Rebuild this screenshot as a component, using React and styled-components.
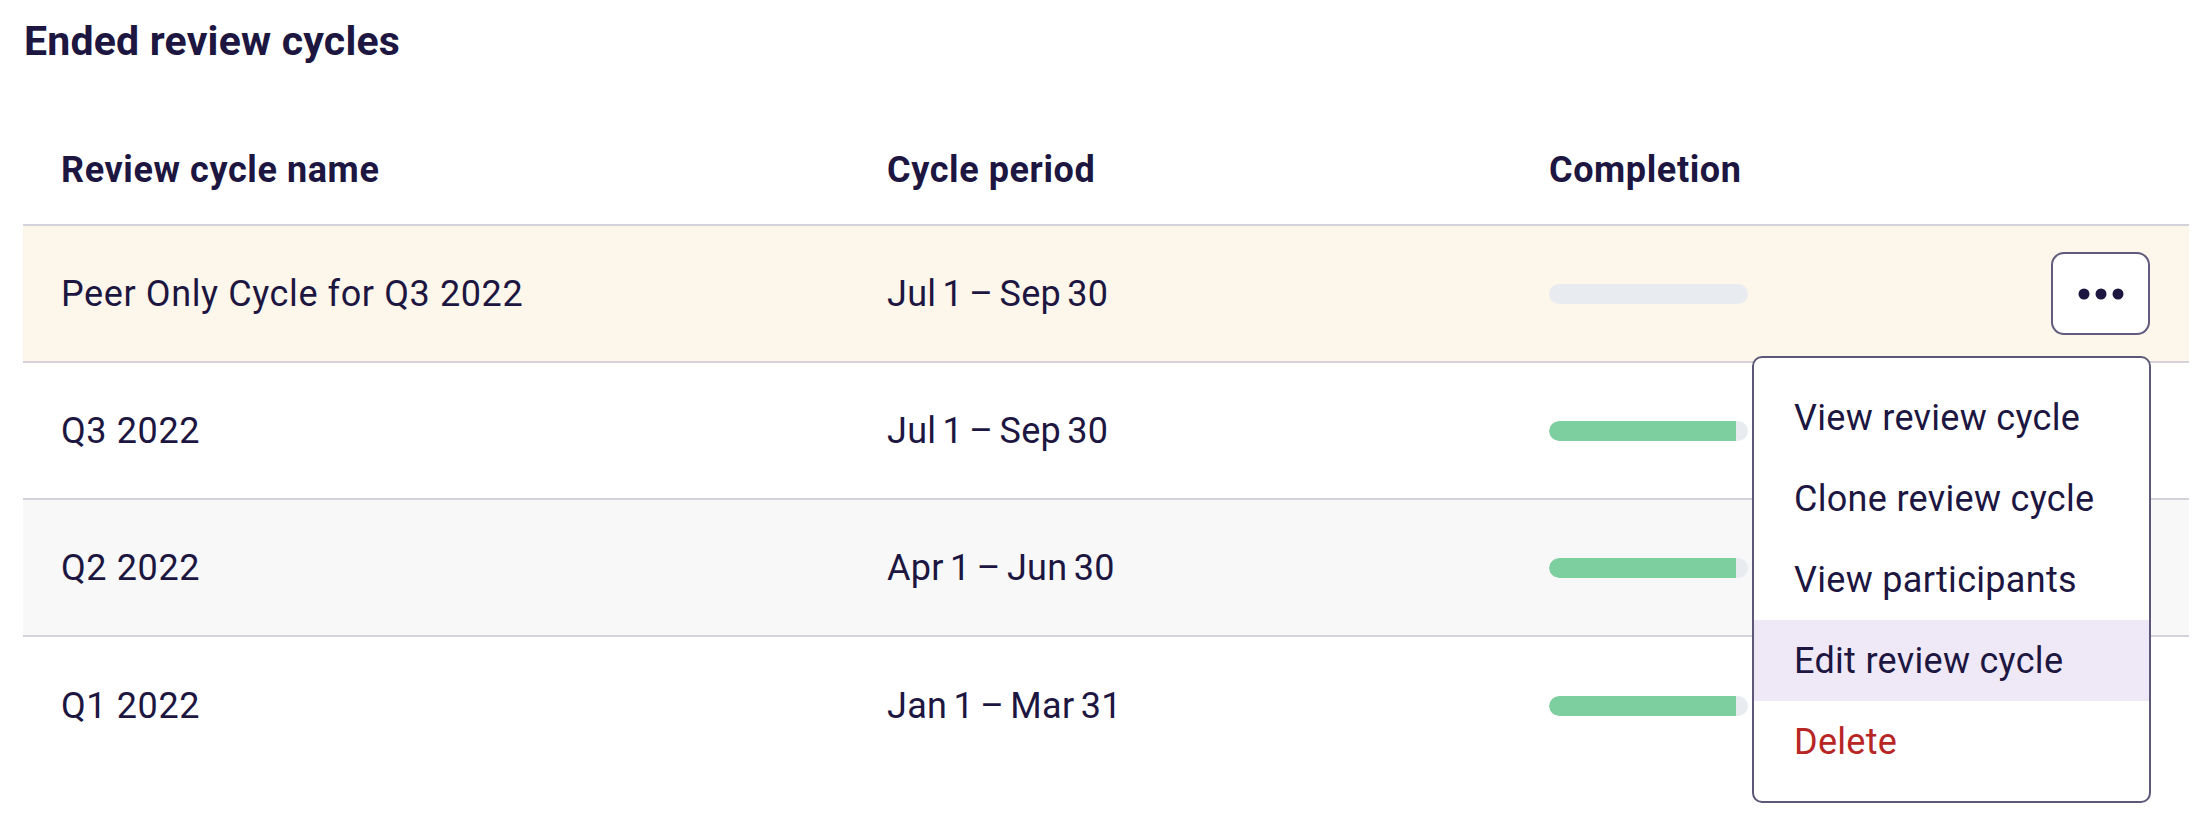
import React from "react";
import styled, { createGlobalStyle } from "styled-components";

const GlobalStyle = createGlobalStyle`
  html, body {
    margin: 0;
    padding: 0;
    background: #ffffff;
  }
  body {
    font-family: Roboto, "Noto Sans", sans-serif;
    color: #1c1641;
    min-height: 828px;
  }
  * { box-sizing: border-box; }
`;

const Page = styled.div`
  min-height: 828px;
  padding: 0 23px;
`;

const Title = styled.h2`
  margin: 0;
  padding: 3px 0 0 1px;
  font-size: 41px;
  line-height: 76px;
  font-weight: 700;
  letter-spacing: 0.2px;
  color: #1c1641;
`;

const Table = styled.div`
  margin-top: 37px;
  display: flex;
  flex-direction: column;
`;

const columns = `826px 662px 1fr auto`;

const HeaderRow = styled.div`
  display: grid;
  grid-template-columns: ${columns};
  align-items: center;
  height: 110px;
  border-bottom: 2px solid #d4d2da;
`;

const HeaderCell = styled.div`
  padding-left: 38px;
  font-size: 36px;
  font-weight: 700;
  line-height: 44px;
  letter-spacing: 0.6px;
`;

const Row = styled.div`
  display: grid;
  grid-template-columns: ${columns};
  align-items: center;
  height: 137px;
  background: ${(p) => p.$bg || "#ffffff"};
  border-bottom: ${(p) => (p.$last ? "none" : "2px solid #d4d2da")};
`;

const Cell = styled.div`
  padding-left: 38px;
  font-size: 36px;
  font-weight: 400;
  line-height: 44px;
  letter-spacing: ${(p) => (p.$period ? "0.3px" : "0.6px")};
  word-spacing: ${(p) => (p.$period ? "-3px" : "0")};
`;

const ActionCell = styled.div`
  padding-right: 39px;
  justify-self: end;
`;

const ActionWrap = styled.div`
  position: relative;
  width: 99px;
  height: 83px;
`;

const MoreButton = styled.button`
  width: 99px;
  height: 83px;
  border: 2px solid #625b7d;
  border-radius: 13px;
  background: #ffffff;
  display: flex;
  align-items: center;
  justify-content: center;
  padding: 0;
  cursor: pointer;
`;

const Bar = styled.div`
  width: 199px;
  height: 20px;
  border-radius: 10px;
  background: #e8ebef;
  overflow: hidden;
`;

const BarFill = styled.div`
  height: 100%;
  background: #7dcf9f;
  border-radius: 10px 0 0 10px;
`;

const Menu = styled.div`
  position: absolute;
  top: calc(100% + 21px);
  right: -1px;
  width: 399px;
  background: #ffffff;
  border: 2px solid #5e5878;
  border-radius: 10px;
  padding: 19px 0;
  z-index: 10;
`;

const MenuItem = styled.div`
  height: 81px;
  padding: 0 40px;
  display: flex;
  align-items: center;
  font-size: 36px;
  line-height: 44px;
  letter-spacing: 0.3px;
  background: ${(p) => (p.$active ? "#efe8f7" : "transparent")};
  color: ${(p) => (p.$danger ? "#b82525" : "#1c1641")};
  cursor: pointer;
`;

const DotsIcon = () => (
  <svg width="46" height="12" viewBox="0 0 46 12" aria-hidden="true">
    <circle cx="6" cy="6" r="5.5" fill="#1c1641" />
    <circle cx="23" cy="6" r="5.5" fill="#1c1641" />
    <circle cx="40" cy="6" r="5.5" fill="#1c1641" />
  </svg>
);

const rows = [
  { name: "Peer Only Cycle for Q3 2022", period: "Jul 1 – Sep 30", pct: 0, bg: "#fdf6eb", menu: true },
  { name: "Q3 2022", period: "Jul 1 – Sep 30", pct: 94, bg: "#ffffff" },
  { name: "Q2 2022", period: "Apr 1 – Jun 30", pct: 94, bg: "#f8f8f8" },
  { name: "Q1 2022", period: "Jan 1 – Mar 31", pct: 94, bg: "#ffffff" },
];

const menuItems = [
  { label: "View review cycle" },
  { label: "Clone review cycle" },
  { label: "View participants" },
  { label: "Edit review cycle", active: true },
  { label: "Delete", danger: true },
];

export default function App() {
  return (
    <>
      <GlobalStyle />
      <Page>
        <Title>Ended review cycles</Title>
        <Table>
          <HeaderRow>
            <HeaderCell>Review cycle name</HeaderCell>
            <HeaderCell>Cycle period</HeaderCell>
            <HeaderCell>Completion</HeaderCell>
            <div />
          </HeaderRow>
          {rows.map((r, i) => (
            <Row key={r.name} $bg={r.bg} $last={i === rows.length - 1}>
              <Cell>{r.name}</Cell>
              <Cell $period>{r.period}</Cell>
              <Cell>
                <Bar>
                  <BarFill style={{ width: `${r.pct}%` }} />
                </Bar>
              </Cell>
              <ActionCell>
                {r.menu && (
                  <ActionWrap>
                    <MoreButton aria-label="More actions">
                      <DotsIcon />
                    </MoreButton>
                    <Menu>
                      {menuItems.map((m) => (
                        <MenuItem key={m.label} $active={m.active} $danger={m.danger}>
                          {m.label}
                        </MenuItem>
                      ))}
                    </Menu>
                  </ActionWrap>
                )}
              </ActionCell>
            </Row>
          ))}
        </Table>
      </Page>
    </>
  );
}
